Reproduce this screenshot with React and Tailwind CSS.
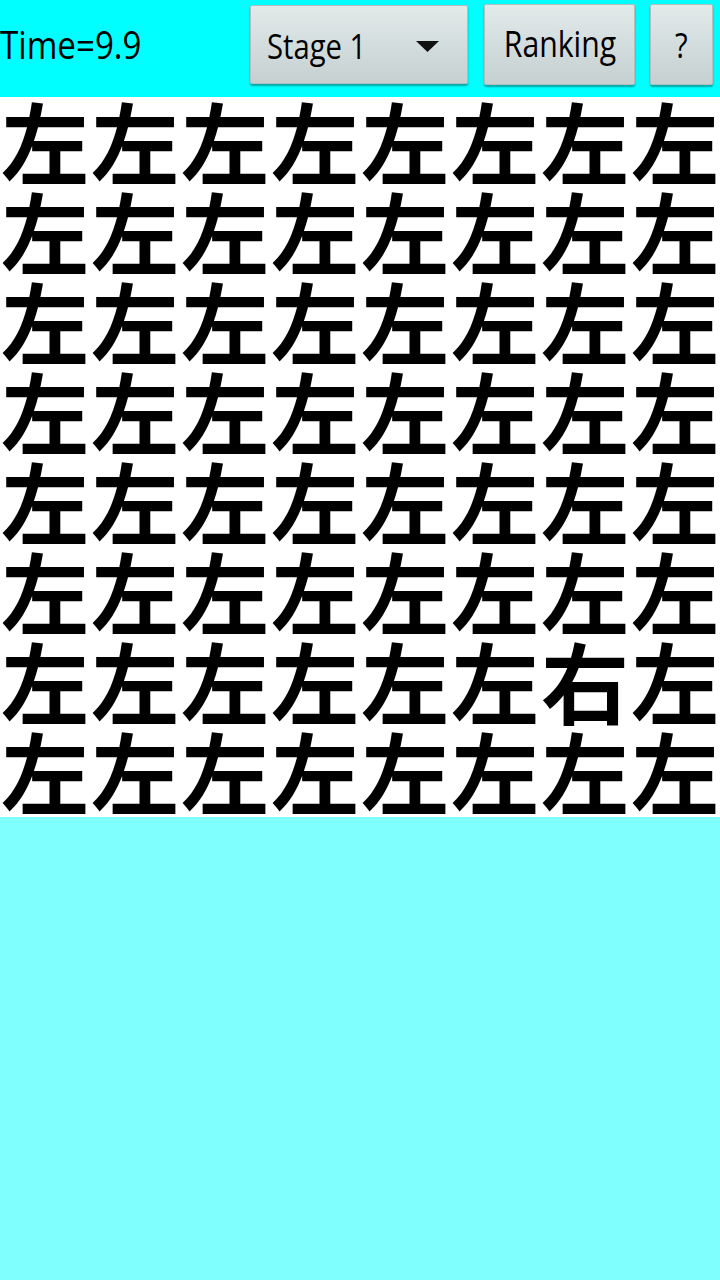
import { useState } from 'react'

const ROWS = 8
const COLS = 8
const ODD = [6, 6] // row, col of the different glyph

function Btn({ className = '', children }) {
  return (
    <div
      className={`flex items-center rounded-[2px] border border-[#b4bebe] bg-gradient-to-b from-[#e2eaea] to-[#c6d0d0] shadow-[0_2px_2px_rgba(0,0,0,0.35)] ${className}`}
    >
      {children}
    </div>
  )
}

export default function App() {
  const [time] = useState(9.9)

  return (
    <div className="w-[720px] h-[1280px] flex flex-col bg-[#80ffff] font-['Open_Sans',sans-serif] text-black">
      <div className="h-[97px] shrink-0 bg-[#00ffff] flex items-start">
        <div className="flex-1 h-[88px] flex items-center">
          <span className="inline-block text-[39px] leading-none origin-left scale-x-[0.85] -mt-[2px]">
            Time={time.toFixed(1)}
          </span>
        </div>
        <Btn className="mt-[5px] w-[218px] h-[79px] pl-[16px] pr-[28px] justify-between">
          <span className="inline-block text-[34px] leading-none origin-left scale-x-[0.86] mt-[2px]">Stage 1</span>
          <svg width="23" height="11" viewBox="0 0 23 11" className="mt-[4px]">
            <path d="M0 0H23L11.5 11Z" fill="#111" />
          </svg>
        </Btn>
        <Btn className="ml-[16px] mt-[4px] w-[151px] h-[81px] justify-center">
          <span className="inline-block text-[36px] leading-none scale-x-[0.84] -mt-[2px]">Ranking</span>
        </Btn>
        <Btn className="ml-[15px] mt-[4px] w-[63px] h-[81px] justify-center">
          <span className="inline-block text-[34px] leading-none scale-x-[0.86]">?</span>
        </Btn>
        <div className="w-[7px]" />
      </div>

      <div className="grid grid-cols-8 bg-white font-['Noto_Sans_CJK_JP',sans-serif]">
        {Array.from({ length: ROWS * COLS }).map((_, i) => {
          const r = Math.floor(i / COLS)
          const c = i % COLS
          const odd = r === ODD[0] && c === ODD[1]
          return (
            <div key={i} className="h-[90px] flex justify-center items-start">
              <span className="text-[88px] font-bold leading-[84px]">{odd ? '右' : '左'}</span>
            </div>
          )
        })}
      </div>

      <div className="flex-1" />
    </div>
  )
}
